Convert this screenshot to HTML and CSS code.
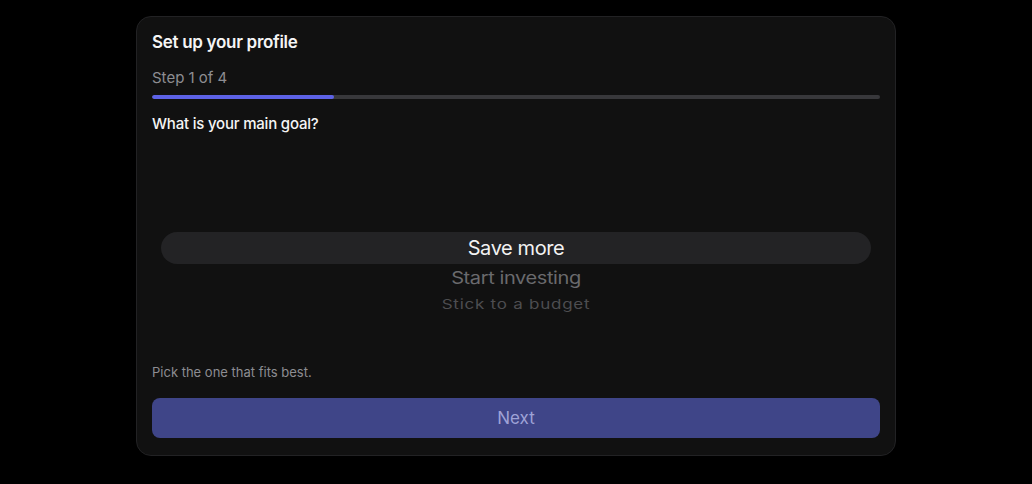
FILE: index.html
```html
<!DOCTYPE html>
<html lang="en">
<head>
<meta charset="utf-8">
<title>Set up your profile</title>
<link rel="stylesheet" href="styles.css">
</head>
<body>
<main class="card">
  <h1 class="title">Set up your profile</h1>
  <p class="step">Step 1 of 4</p>
  <div class="progress"><div class="progress-fill" style="width:25%"></div></div>
  <h2 class="question">What is your main goal?</h2>
  <div class="picker">
    <div class="picker-highlight"></div>
    <div class="picker-item picker-item-selected">Save more</div>
    <div class="picker-item picker-item-near">Start investing</div>
    <div class="picker-item picker-item-far">Stick to a budget</div>
  </div>
  <p class="hint">Pick the one that fits best.</p>
  <button class="next-btn" type="button">Next</button>
</main>
</body>
</html>
```

FILE: styles.css
```css
* { box-sizing: border-box; }
html, body { margin: 0; padding: 0; }
body {
  background: #000;
  font-family: Inter, "Noto Sans", "Liberation Sans", sans-serif;
  color: #fff;
  padding-top: 16px;
}
.card {
  width: 760px;
  height: 440px;
  margin: 0 auto;
  background: #111111;
  border: 1px solid #222224;
  border-radius: 15px;
  padding: 15px 15px 17px;
  display: flex;
  flex-direction: column;
}
.title {
  margin: 0;
  font-size: 17px;
  line-height: 20px;
  font-weight: 600;
  color: #f5f5f5;
  letter-spacing: -0.3px;
}
.step {
  margin: 17px 0 0;
  font-size: 15px;
  line-height: 18px;
  color: #8d8d92;
}
.progress {
  margin-top: 8px;
  height: 4px;
  border-radius: 2px;
  background: #38383b;
  overflow: hidden;
}
.progress-fill {
  height: 100%;
  background: #5d62e6;
  border-radius: 2px;
}
.question {
  margin: 16px 0 0;
  font-size: 15px;
  line-height: 18px;
  font-weight: 500;
  letter-spacing: -0.2px;
  color: #f5f5f5;
}
.picker {
  position: relative;
  height: 231px;
  padding-top: 99px;
  display: flex;
  flex-direction: column;
  align-items: center;
}
.picker-highlight {
  position: absolute;
  left: 9px;
  right: 9px;
  top: 99px;
  height: 32px;
  border-radius: 16px;
  background: #232325;
}
.picker-item {
  position: relative;
  text-align: center;
  white-space: nowrap;
}
.picker-item-selected {
  height: 32px;
  line-height: 32px;
  font-size: 20px;
  letter-spacing: -0.4px;
  color: #f2f2f2;
}
.picker-item-near {
  height: 28px;
  line-height: 28px;
  font-size: 20px;
  letter-spacing: -0.4px;
  color: #6a6a6d;
  transform: scaleY(0.85);
}
.picker-item-far {
  height: 24px;
  line-height: 24px;
  font-size: 17px;
  letter-spacing: 0.75px;
  color: #4d4d50;
  transform: scaleY(0.78);
}
.hint {
  margin: 0;
  font-size: 13px;
  line-height: 16px;
  color: #8d8d92;
}
.next-btn {
  margin-top: 18px;
  height: 40px;
  width: 100%;
  border: none;
  border-radius: 8px;
  background: #3f4588;
  color: #9ea2d6;
  font-family: inherit;
  font-size: 17px;
}
```
